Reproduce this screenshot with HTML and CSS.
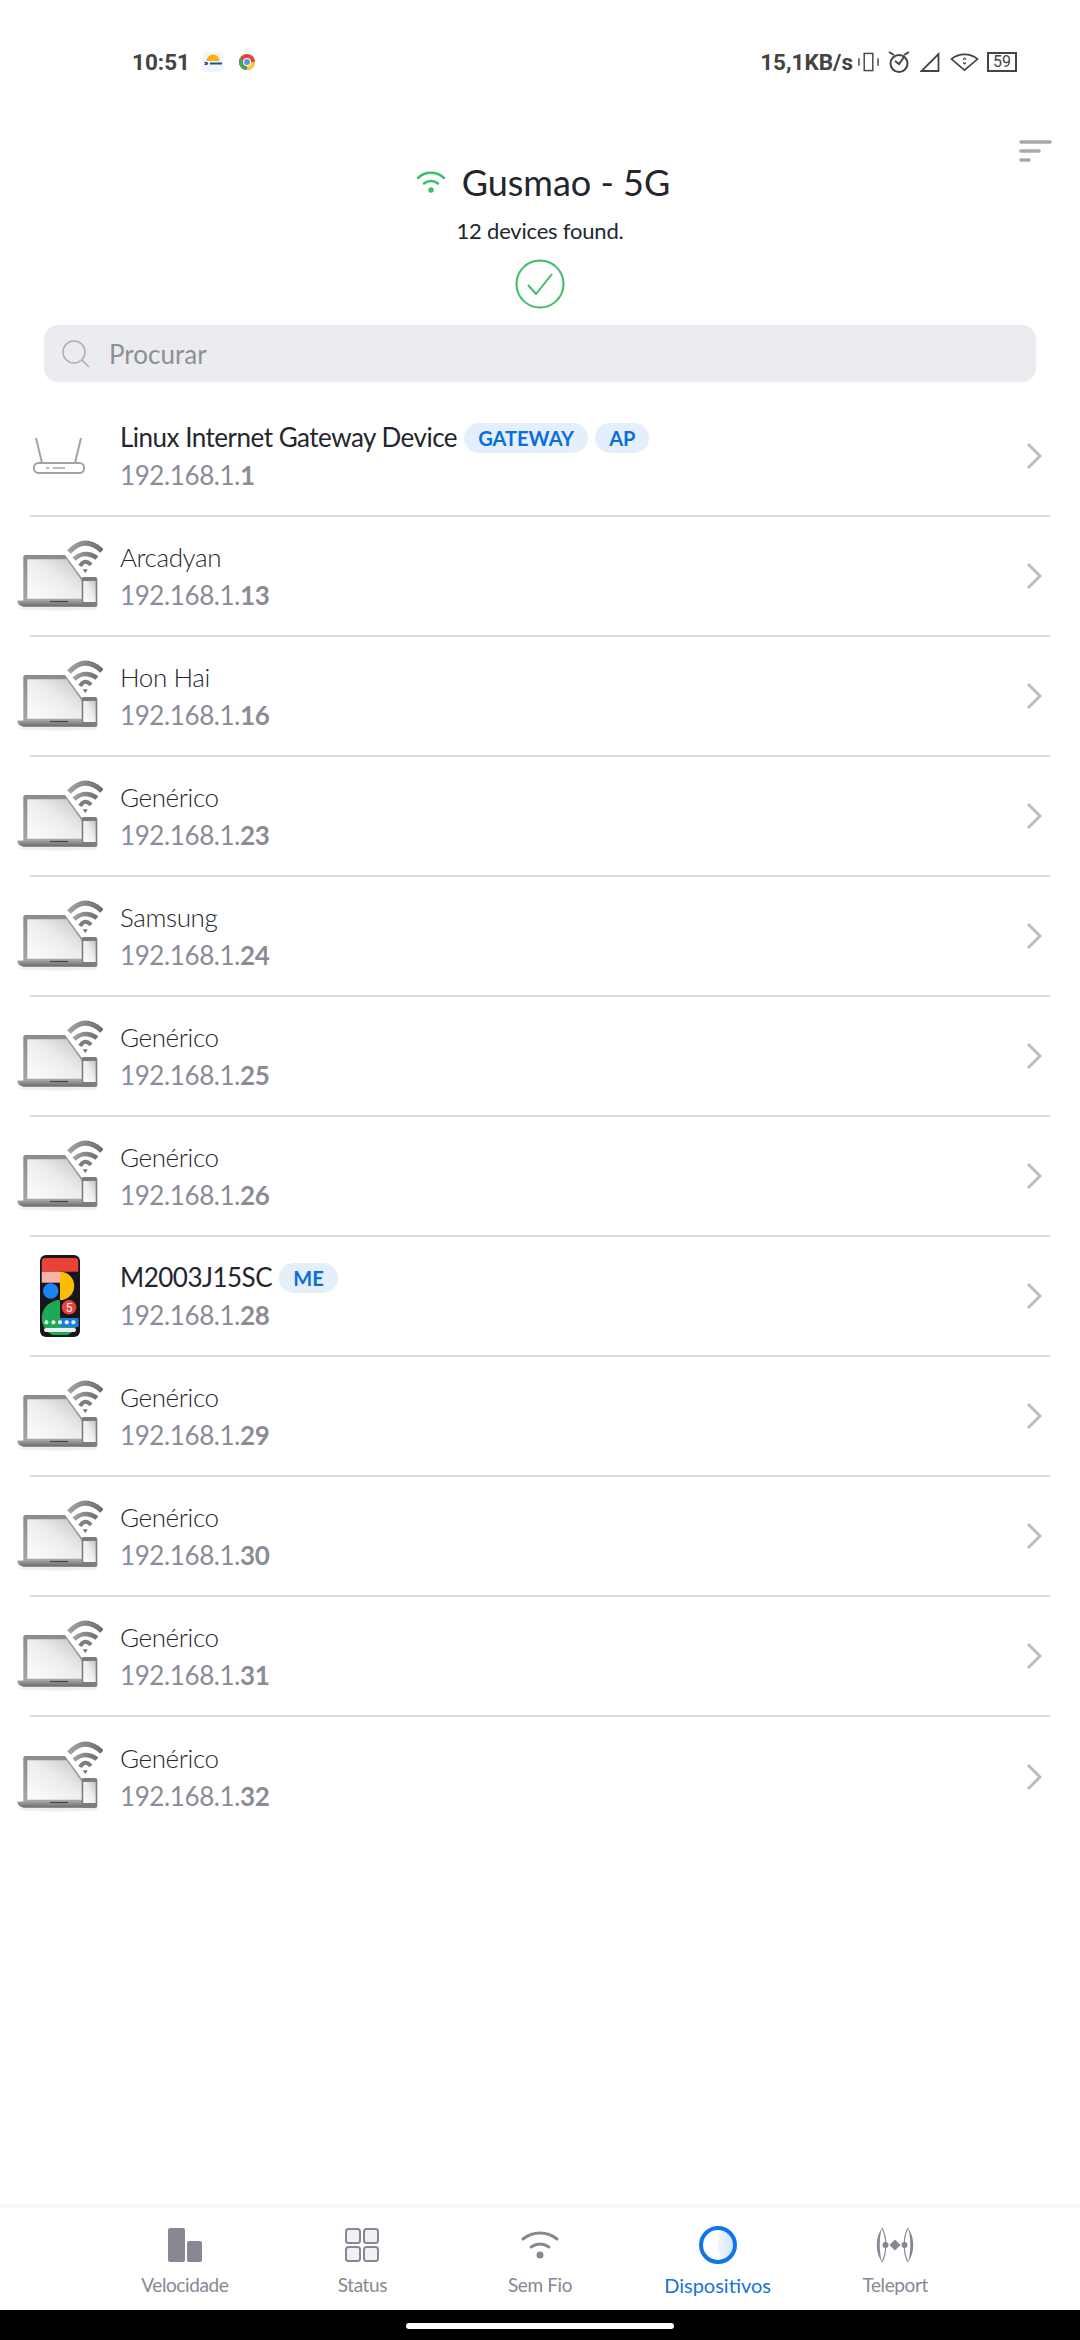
FILE: index.html
```html
<!DOCTYPE html>
<html lang="en">
<head>
  <meta charset="UTF-8" />
  <meta name="viewport" content="width=device-width, initial-scale=1" />
  <title>Dispositivos</title>
  <link rel="stylesheet" href="styles.css">
</head>
<body>
  <!-- Shared device icons -->
  <svg class="sprite" aria-hidden="true">
    <defs>
      <linearGradient id="lid" x1="0" y1="0" x2="0" y2="1">
        <stop offset="0" stop-color="#8c8c8c" />
        <stop offset="1" stop-color="#a8a8a8" />
      </linearGradient>
      <linearGradient id="screen" x1="0" y1="1" x2="1" y2="0">
        <stop offset="0" stop-color="#fdfdfd" />
        <stop offset="0.55" stop-color="#ececec" />
        <stop offset="1" stop-color="#c4c4c4" />
      </linearGradient>
      <linearGradient id="base" x1="0" y1="0" x2="0" y2="1">
        <stop offset="0" stop-color="#a0a0a0" />
        <stop offset="1" stop-color="#6a6a6a" />
      </linearGradient>
      <linearGradient id="arcs" x1="0" y1="0" x2="1" y2="0">
        <stop offset="0" stop-color="#a2a2a2" />
        <stop offset="1" stop-color="#6e6e6e" />
      </linearGradient>
      <clipPath id="pixel-screen"><rect x="1.5" y="3" width="37" height="77" rx="4" /></clipPath>
    </defs>
    <symbol id="laptop" viewBox="0 -4 86 72">
      <ellipse cx="42" cy="65" rx="40" ry="2.500" fill="#efefef" />
      <path d="M6.300 14a2 2 0 0 1 2-2H48l17 23v24H6.300z" fill="url(#lid)" />
      <path d="M10.300 16.300h39.400L65 38v17.700H10.300z" fill="url(#screen)" />
      <path d="M0.300 57.500H66v6.300H8c-4 0-7.700-2.500-7.700-6.300z" fill="url(#base)" />
      <path d="M33 58.500h18" stroke="#444" stroke-width="1.200" />
      <rect x="64.700" y="34" width="15.600" height="30" rx="2" fill="#7d7d7d" />
      <rect x="66.300" y="38" width="12.400" height="21" fill="url(#screen)" />
      <g fill="none" stroke="url(#arcs)">
        <path d="M52 9Q68-8 85 8" stroke-width="5" />
        <path d="M57 16Q68 6.500 80 15" stroke-width="4.500" />
      </g>
      <path d="M63 23Q68 15 74 22" fill="none" stroke="#7e7e7e" stroke-width="4" />
      <path d="M65.700 26.300h5l-2.400 4z" fill="#777" />
    </symbol>
    <symbol id="router" viewBox="0 0 52 38">
      <g fill="none" stroke="#a3a3a6" stroke-width="2">
        <path d="M3 1l6 25M48 1l-6 25" />
        <rect x="1" y="26" width="50" height="10" rx="4.500" />
      </g>
      <path d="M13 31h3M20 31h12" stroke="#a3a3a6" stroke-width="1.500" />
    </symbol>
    <symbol id="chevron" viewBox="0 0 16 28">
      <path d="M2 2l12 12L2 26" fill="none" stroke="#bdbdbd" stroke-width="3" />
    </symbol>
  </svg>

  <div class="phone">
    <!-- Status bar -->
    <div class="status-bar">
      <div class="status-left">
        <span class="clock">10:51</span>
        <svg class="weather" viewBox="0 0 20 20">
          <rect width="20" height="20" rx="4" fill="#f1f4fb" />
          <path d="M3.500 9a6.500 6.500 0 0 1 13 0z" fill="#fdb10e" />
          <path d="M7 11.500h12" stroke="#14549a" stroke-width="2" />
          <path d="M1 10h3l1.500 1.500L4 13H1l1.500-1.500z" fill="#14549a" />
        </svg>
        <svg class="chrome" viewBox="0 0 16 16">
          <circle cx="8" cy="8" r="8" fill="#e0453a" />
          <path d="M8 8L1 4A8 8 0 0 0 8 16z" fill="#47a651" />
          <path d="M8 8h8a8 8 0 0 1-8 8z" fill="#f5d03b" />
          <circle cx="8" cy="8" r="4" fill="#fff" />
          <circle cx="8" cy="8" r="3" fill="#5b95e5" />
        </svg>
      </div>
      <div class="status-right">
        <span class="speed">15,1KB/s</span>
        <svg class="vibrate" viewBox="0 0 22 20" fill="none" stroke="#444" stroke-width="1.500">
          <rect x="6.500" y="1" width="9" height="18" />
          <path d="M1 6v8M21 6v8" />
        </svg>
        <svg class="alarm" viewBox="0 0 22 22" fill="none" stroke="#444" stroke-width="2">
          <circle cx="11" cy="12.500" r="8.500" />
          <path d="M1 1l5 3M21 1l-5 3M7 10l4 3 5-7" />
        </svg>
        <svg class="signal" viewBox="0 0 20 20" fill="none" stroke="#444" stroke-width="1.800">
          <path d="M18.500 2v17H1.500z" />
        </svg>
        <svg class="wifi-status" viewBox="0 0 30 20" fill="none" stroke="#444" stroke-width="1.800">
          <path d="M1.500 7C9 .5 21 .5 28.500 7L15 18.500z" />
          <path d="M13.500 7.500L15 6l1.500 1.500M13.500 10.500L15 12l1.500-1.500" stroke-width="1.200" />
        </svg>
        <div class="battery">59</div>
      </div>
    </div>

    <!-- Network header -->
    <div class="toolbar">
      <svg class="sort-icon" viewBox="0 0 33 22">
        <path d="M2 2h29M2 11h18M2 20h8" stroke="#a9a9ac" stroke-width="3.500" stroke-linecap="round" />
      </svg>
    </div>
    <div class="network">
      <svg class="network-wifi" viewBox="0 0 30 22" fill="none" stroke="#3dbf6a" stroke-width="2.500" stroke-linecap="round">
        <path d="M2 7a19 19 0 0 1 26 0M8 12.500a11 11 0 0 1 14 0" />
        <circle cx="15" cy="19" r="1.500" fill="#3dbf6a" />
      </svg>
      <span class="network-name">Gusmao - 5G</span>
    </div>
    <div class="found">12 devices found.</div>
    <svg class="check" viewBox="0 0 50 50" fill="none" stroke="#3dbf6a" stroke-width="2">
      <circle cx="25" cy="25" r="23.500" />
      <path d="M13 26l8 9 16-20" />
    </svg>

    <div class="search">
      <svg class="search-icon" viewBox="0 0 28 28" fill="none" stroke="#aeaeb2" stroke-width="1.500">
        <circle cx="12" cy="12" r="11" />
        <path d="M20 20l7 7" />
      </svg>
      <span>Procurar</span>
    </div>

    <!-- Device list -->
    <ul class="device-list">
      <li class="device">
        <div class="device-icon"><svg class="icon-router"><use href="#router" /></svg></div>
        <div class="device-info">
          <div class="device-name dark">Linux Internet Gateway Device <span class="chip">GATEWAY</span> <span class="chip">AP</span></div>
          <div class="device-ip">192.168.1.<b>1</b></div>
        </div>
        <svg class="chevron"><use href="#chevron" /></svg>
      </li>
      <li class="device">
        <div class="device-icon"><svg class="icon-laptop"><use href="#laptop" /></svg></div>
        <div class="device-info">
          <div class="device-name">Arcadyan</div>
          <div class="device-ip">192.168.1.<b>13</b></div>
        </div>
        <svg class="chevron"><use href="#chevron" /></svg>
      </li>
      <li class="device">
        <div class="device-icon"><svg class="icon-laptop"><use href="#laptop" /></svg></div>
        <div class="device-info">
          <div class="device-name">Hon Hai</div>
          <div class="device-ip">192.168.1.<b>16</b></div>
        </div>
        <svg class="chevron"><use href="#chevron" /></svg>
      </li>
      <li class="device">
        <div class="device-icon"><svg class="icon-laptop"><use href="#laptop" /></svg></div>
        <div class="device-info">
          <div class="device-name">Genérico</div>
          <div class="device-ip">192.168.1.<b>23</b></div>
        </div>
        <svg class="chevron"><use href="#chevron" /></svg>
      </li>
      <li class="device">
        <div class="device-icon"><svg class="icon-laptop"><use href="#laptop" /></svg></div>
        <div class="device-info">
          <div class="device-name">Samsung</div>
          <div class="device-ip">192.168.1.<b>24</b></div>
        </div>
        <svg class="chevron"><use href="#chevron" /></svg>
      </li>
      <li class="device">
        <div class="device-icon"><svg class="icon-laptop"><use href="#laptop" /></svg></div>
        <div class="device-info">
          <div class="device-name">Genérico</div>
          <div class="device-ip">192.168.1.<b>25</b></div>
        </div>
        <svg class="chevron"><use href="#chevron" /></svg>
      </li>
      <li class="device">
        <div class="device-icon"><svg class="icon-laptop"><use href="#laptop" /></svg></div>
        <div class="device-info">
          <div class="device-name">Genérico</div>
          <div class="device-ip">192.168.1.<b>26</b></div>
        </div>
        <svg class="chevron"><use href="#chevron" /></svg>
      </li>
      <li class="device">
        <div class="device-icon">
          <svg class="icon-pixel" viewBox="0 0 40 82">
            <rect width="40" height="82" rx="6" fill="#17171b" />
            <g clip-path="url(#pixel-screen)">
              <rect x="1.500" y="3" width="37" height="13.700" fill="#ea4335" />
              <rect x="1.500" y="16.700" width="18.500" height="11" fill="#f7b3aa" />
              <path d="M20 16.700a14.200 14.200 0 0 1 0 28.400z" fill="#fbbc04" />
              <circle cx="10.700" cy="36" r="7.700" fill="#1a84f0" />
              <path d="M20 45A18.300 18.300 0 1 0 38.300 63.300H20z" fill="#1fa855" />
              <rect x="20" y="63" width="19" height="9" fill="#1a7fe0" />
              <rect x="4" y="73" width="32" height="4" rx="2" fill="#eee" />
            </g>
            <circle cx="29" cy="52.300" r="7.300" fill="#ea4335" />
            <text x="29" y="56.500" class="pixel-five">5</text>
            <g fill="#fff">
              <circle cx="6.400" cy="67.300" r="2" />
              <circle cx="13.400" cy="67.300" r="2" />
              <circle cx="20" cy="67.300" r="2" />
              <circle cx="26.700" cy="67.300" r="2" />
              <circle cx="33.400" cy="67.300" r="2" />
            </g>
          </svg>
        </div>
        <div class="device-info">
          <div class="device-name dark">M2003J15SC <span class="chip">ME</span></div>
          <div class="device-ip">192.168.1.<b>28</b></div>
        </div>
        <svg class="chevron"><use href="#chevron" /></svg>
      </li>
      <li class="device">
        <div class="device-icon"><svg class="icon-laptop"><use href="#laptop" /></svg></div>
        <div class="device-info">
          <div class="device-name">Genérico</div>
          <div class="device-ip">192.168.1.<b>29</b></div>
        </div>
        <svg class="chevron"><use href="#chevron" /></svg>
      </li>
      <li class="device">
        <div class="device-icon"><svg class="icon-laptop"><use href="#laptop" /></svg></div>
        <div class="device-info">
          <div class="device-name">Genérico</div>
          <div class="device-ip">192.168.1.<b>30</b></div>
        </div>
        <svg class="chevron"><use href="#chevron" /></svg>
      </li>
      <li class="device">
        <div class="device-icon"><svg class="icon-laptop"><use href="#laptop" /></svg></div>
        <div class="device-info">
          <div class="device-name">Genérico</div>
          <div class="device-ip">192.168.1.<b>31</b></div>
        </div>
        <svg class="chevron"><use href="#chevron" /></svg>
      </li>
      <li class="device last">
        <div class="device-icon"><svg class="icon-laptop"><use href="#laptop" /></svg></div>
        <div class="device-info">
          <div class="device-name">Genérico</div>
          <div class="device-ip">192.168.1.<b>32</b></div>
        </div>
        <svg class="chevron"><use href="#chevron" /></svg>
      </li>
    </ul>

    <!-- Bottom tabs -->
    <nav class="tabs">
      <div class="tab">
        <svg viewBox="0 0 40 40">
          <rect x="3" y="3" width="17" height="34" rx="2" fill="#878893" />
          <rect x="22" y="16" width="15" height="21" rx="2" fill="#878893" />
        </svg>
        <span>Velocidade</span>
      </div>
      <div class="tab">
        <svg viewBox="0 0 40 40" fill="#f1f1f5" stroke="#878893" stroke-width="2">
          <rect x="4" y="4" width="14" height="14" rx="2.500" />
          <rect x="22" y="4" width="14" height="14" rx="2.500" />
          <rect x="4" y="22" width="14" height="14" rx="2.500" />
          <rect x="22" y="22" width="14" height="14" rx="2.500" />
        </svg>
        <span>Status</span>
      </div>
      <div class="tab">
        <svg viewBox="0 0 40 40" fill="none" stroke="#878893" stroke-width="3" stroke-linecap="round">
          <path d="M3 14c10-8 24-8 34 0M11 22c6-4 12-4 18 0" />
          <circle cx="20" cy="30" r="2" fill="#878893" />
        </svg>
        <span>Sem Fio</span>
      </div>
      <div class="tab active">
        <svg viewBox="0 0 40 40">
          <defs>
            <linearGradient id="ring-fill" x1="0" y1="0" x2="1" y2="0">
              <stop offset="0" stop-color="#f2f7fe" />
              <stop offset="1" stop-color="#cfe2fb" />
            </linearGradient>
          </defs>
          <path d="M22 4a16 16 0 0 1 0 32c4-8-6-8-2-16z" fill="url(#ring-fill)" />
          <circle cx="20" cy="20" r="17" fill="none" stroke="#0f75ee" stroke-width="4" />
        </svg>
        <span>Dispositivos</span>
      </div>
      <div class="tab">
        <svg viewBox="0 0 40 40">
          <g fill="#878893">
            <path d="M7 3C0 12 0 28 7 37C4 28 4 12 7 3z" />
            <path d="M33 3C40 12 40 28 33 37C36 28 36 12 33 3z" />
            <path d="M20 14.500l5.500 5.500-5.500 5.500-5.500-5.500z" />
            <circle cx="10.500" cy="20" r="3" />
            <circle cx="29.500" cy="20" r="3" />
          </g>
          <path d="M7 3C12 12 12 28 7 37M33 3C28 12 28 28 33 37" fill="none" stroke="#878893" stroke-width="1.200" />
        </svg>
        <span>Teleport</span>
      </div>
    </nav>
    <div class="nav-bar"><div class="home-pill"></div></div>
  </div>
</body>
</html>
```

FILE: styles.css
```css
* {
  box-sizing: border-box;
}

body {
  margin: 0;
  background: #fff;
  font-family: 'Lato', 'Noto Sans', sans-serif;
}

.sprite {
  position: absolute;
  width: 0;
  height: 0;
}

.pixel-five {
  font-family: 'Roboto', sans-serif;
  font-size: 12px;
  fill: #fff;
  text-anchor: middle;
}

.phone {
  width: 1080px;
  height: 2340px;
  display: flex;
  flex-direction: column;
  overflow: hidden;
}

/* Status bar */
.status-bar {
  height: 124px;
  padding: 50px 63px 0 132px;
  display: flex;
  justify-content: space-between;
  align-items: flex-start;
  font-family: 'Roboto', sans-serif;
  color: #444;
}

.status-left,
.status-right {
  height: 24px;
  display: flex;
  align-items: center;
}

.clock {
  font-size: 22.5px;
  font-weight: 700;
  width: 71px;
}

.weather {
  width: 20px;
  height: 20px;
  margin-right: 16px;
}

.chrome {
  width: 16px;
  height: 16px;
}

.speed {
  font-size: 22.5px;
  font-weight: 700;
  margin-right: 5px;
}

.vibrate {
  width: 21px;
  height: 20px;
  margin-right: 9px;
}

.alarm {
  width: 22px;
  height: 22px;
  margin-right: 10px;
}

.signal {
  width: 20px;
  height: 20px;
  margin-right: 10px;
}

.wifi-status {
  width: 29px;
  height: 20px;
  margin-right: 8px;
}

.battery {
  width: 30px;
  height: 20px;
  border: 2px solid #444;
  font-size: 16px;
  line-height: 16px;
  text-align: center;
  font-weight: 400;
}

/* Network header */
.toolbar {
  height: 38px;
  padding: 16px 28px 0 0;
  display: flex;
  justify-content: flex-end;
}

.sort-icon {
  width: 33px;
  height: 22px;
  flex: none;
}

.network {
  height: 40px;
  padding-left: 6px;
  display: flex;
  justify-content: center;
  align-items: center;
  gap: 16px;
}

.network-wifi {
  width: 30px;
  height: 22px;
}

.network-name {
  font-size: 36px;
  color: #23262d;
}

.found {
  margin-top: 15px;
  font-size: 22px;
  line-height: 28px;
  letter-spacing: -0.2px;
  color: #23262d;
  text-align: center;
}

.check {
  width: 50px;
  height: 50px;
  margin: 14px auto 0;
  flex: none;
}

.search {
  height: 57px;
  margin: 16px 44px 15px;
  padding-left: 18px;
  display: flex;
  align-items: center;
  gap: 19px;
  flex: none;
  background: #ebecef;
  border-radius: 14px;
  font-size: 26px;
  color: #8e8f99;
}

.search-icon {
  width: 28px;
  height: 28px;
}

/* Device list */
.device-list {
  list-style: none;
  margin: 0;
  padding: 0 30px;
  flex: 1;
}

.device {
  height: 120px;
  display: flex;
  align-items: center;
  border-bottom: 2px solid #dcdcdc;
}

.device.last {
  border-bottom: none;
}

.device-icon {
  width: 120px;
  margin-left: -30px;
  display: flex;
  justify-content: center;
  flex: none;
}

.icon-laptop {
  width: 86px;
  height: 72px;
  margin-bottom: 2px;
}

.icon-router {
  width: 52px;
  height: 38px;
  margin-left: -2px;
}

.icon-pixel {
  width: 40px;
  height: 82px;
}

.device-info {
  flex: 1;
  min-width: 0;
}

.device-name {
  font-size: 26px;
  line-height: 38px;
  letter-spacing: -0.4px;
  font-weight: 300;
  color: #26282e;
}

.device-name.dark {
  letter-spacing: -0.5px;
  font-weight: 400;
  color: #23262d;
}

.device-ip {
  font-size: 26px;
  line-height: 38px;
  letter-spacing: -0.4px;
  color: #8a8c96;
}

.device-ip b {
  font-weight: 700;
}

.chip {
  display: inline-block;
  height: 30px;
  padding: 0 14px;
  margin-left: 1px;
  border-radius: 15px;
  background: #e4effb;
  color: #0a6fd8;
  font-size: 20px;
  font-weight: 700;
  line-height: 30px;
  letter-spacing: 0;
  vertical-align: 1px;
}

.chevron {
  width: 16px;
  height: 28px;
  margin-right: 8px;
  flex: none;
}

/* Bottom tabs */
.tabs {
  height: 106px;
  padding: 20px 96px 0;
  display: grid;
  grid-template-columns: repeat(5, 1fr);
  flex: none;
  border-top: 4px solid #f7f7f8;
}

.tab {
  display: flex;
  flex-direction: column;
  align-items: center;
  gap: 7px;
  font-size: 19px;
  line-height: 26px;
  letter-spacing: -0.4px;
  color: #878893;
}

.tab svg {
  width: 40px;
  height: 40px;
  margin-top: -3px;
}

.tab.active {
  font-size: 20px;
  letter-spacing: 0;
  color: #1473d6;
}

.nav-bar {
  height: 30px;
  padding-top: 13px;
  background: #000;
  flex: none;
}

.home-pill {
  width: 268px;
  height: 6px;
  margin: 0 auto;
  background: #fff;
  border-radius: 3px;
}
```
